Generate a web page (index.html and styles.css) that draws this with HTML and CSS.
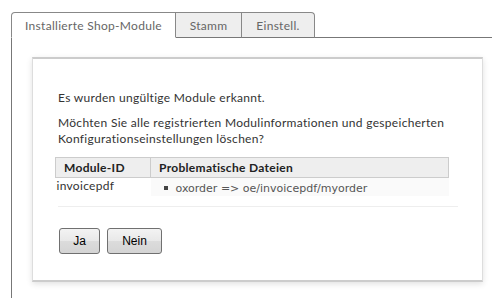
FILE: index.html
```html
<!DOCTYPE html>
<html lang="de">
<head>
    <meta charset="UTF-8">
    <title>Shop-Module</title>
    <link rel="stylesheet" href="styles.css">
</head>
<body>

<div class="tabs">
    <div class="tab active">Installierte Shop-Module</div>
    <div class="tab">Stamm</div>
    <div class="tab last">Einstell.</div>
</div>

<div class="panel">
    <div class="dialog">
        <p class="msg">Es wurden ungültige Module erkannt.</p>
        <p class="msg">Möchten Sie alle registrierten Modulinformationen und gespeicherten Konfigurationseinstellungen löschen?</p>

        <table class="modules">
            <tr>
                <th class="col-id">Module-ID</th>
                <th>Problematische Dateien</th>
            </tr>
            <tr>
                <td class="col-id">invoicepdf</td>
                <td class="files">
                    <ul>
                        <li>oxorder =&gt; oe/invoicepdf/myorder</li>
                    </ul>
                </td>
            </tr>
        </table>
        <div class="divider"></div>

        <div class="actions">
            <button class="btn btn-yes">Ja</button>
            <button class="btn btn-no">Nein</button>
        </div>
    </div>
</div>

</body>
</html>
```

FILE: styles.css
```css
body {
    margin: 0;
    font-family: Lato, "Open Sans", sans-serif;
    font-size: 12px;
    letter-spacing: 0.3px;
    color: #333;
    background: #fff;
    height: 298px;
    overflow: hidden;
}
.tabs {
    display: flex;
    margin-left: 11px;
    padding-top: 12px;
    border-bottom: 1px solid #777;
}
.tab {
    height: 26px;
    line-height: 25px;
    white-space: nowrap;
    background: #eee;
    color: #666;
    border-top: 1px solid #888;
    border-right: 1px solid #888;
    border-bottom: 1px solid #777;
    margin-bottom: -1px;
    box-sizing: border-box;
    text-align: center;
}
.tab.active {
    width: 165px;
    background: #fff;
    border-left: 1px solid #888;
    border-bottom-color: #fff;
    border-top-left-radius: 4px;
}
.tab:nth-child(2) {
    width: 66px;
}
.tab.last {
    width: 73px;
    border-top-right-radius: 4px;
}
.panel {
    margin-left: 11px;
    border-left: 1px solid #777;
    height: 260px;
    padding: 19px 0 0 20px;
    box-sizing: border-box;
}
.dialog {
    width: 451px;
    height: 225px;
    box-sizing: border-box;
    border: 1px solid #ddd;
    border-top: 2px solid #ccc;
    border-bottom: 2px solid #ccc;
    box-shadow: 0 2px 6px rgba(0, 0, 0, 0.12);
    padding: 31px 0 0 25px;
}
.msg {
    margin: 0 0 9px 0;
    line-height: 16px;
    width: 410px;
}
.modules {
    border-collapse: collapse;
    width: 394px;
    margin: 10px 0 0 -3px;
}
.modules th {
    background: #eee;
    border: 1px solid #ccc;
    height: 19px;
    text-align: left;
    font-weight: bold;
    color: #222;
    padding: 0 0 0 8px;
}
.modules th.col-id {
    width: 86px;
}
.modules td {
    vertical-align: top;
    height: 18px;
    line-height: 13px;
    padding: 1px 0 0 1px;
    box-sizing: border-box;
}
.modules td.files {
    background: #fafafa;
    padding-left: 13px;
    padding-top: 4px;
}
.files ul {
    margin: 0;
    padding: 0;
    list-style: none;
    font-family: "DejaVu Sans", sans-serif;
    font-size: 11px;
    letter-spacing: 0;
    color: #555;
}
.files li::before {
    content: "";
    display: inline-block;
    width: 4px;
    height: 4px;
    background: #444;
    margin: 0 8px 2px 0;
}
.divider {
    width: 400px;
    margin-top: 10px;
    border-top: 1px solid #eee;
}
.actions {
    display: flex;
    gap: 7px;
    margin-top: 21px;
    margin-left: 1px;
}
.btn {
    height: 26px;
    font-family: "Liberation Sans", Arial, sans-serif;
    font-size: 12px;
    letter-spacing: 0;
    color: #000;
    border: 1px solid #707070;
    border-radius: 3px;
    background: linear-gradient(#f3f3f3, #e8e8e8 50%, #dcdcdc 50%, #d4d4d4);
    padding: 0;
}
.btn-yes {
    width: 41px;
}
.btn-no {
    width: 55px;
}
```
